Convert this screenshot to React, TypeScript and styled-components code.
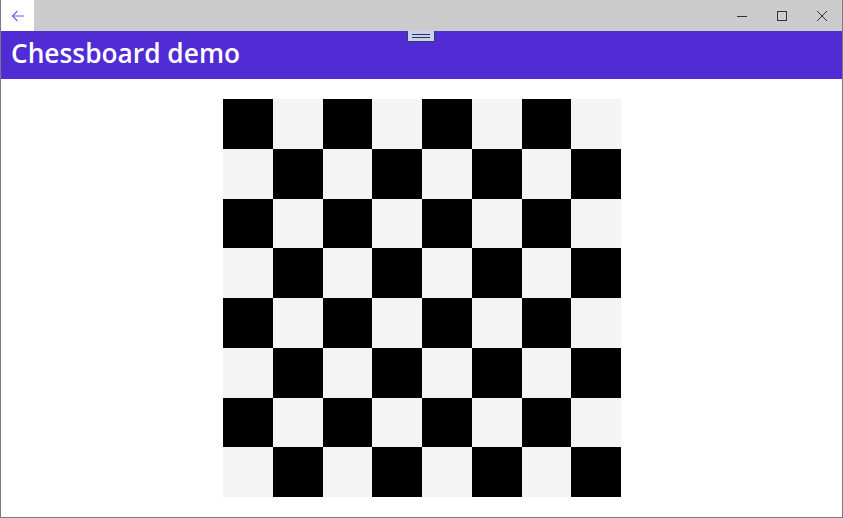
import styled, { createGlobalStyle } from 'styled-components';

const GlobalStyle = createGlobalStyle`
  html, body {
    margin: 0;
    padding: 0;
    background: #ffffff;
  }
  body {
    font-family: "Open Sans", "Noto Sans", sans-serif;
  }
`;

const Window = styled.div`
  width: 843px;
  height: 518px;
  box-sizing: border-box;
  border: 1px solid #7a7a7a;
  border-top: none;
  display: flex;
  flex-direction: column;
  background: #ffffff;
  overflow: hidden;
`;

const TitleBar = styled.div`
  height: 31px;
  display: flex;
  align-items: stretch;
  background: #cccccc;
  flex-shrink: 0;
`;

const BackButton = styled.div`
  width: 33px;
  background: #ffffff;
  display: flex;
  align-items: center;
  justify-content: center;
  color: #6b5be0;
`;

const Spacer = styled.div`
  flex: 1;
`;

const CaptionButton = styled.div`
  width: 40px;
  display: flex;
  align-items: center;
  justify-content: center;
  color: #333333;
`;

const Header = styled.div`
  position: relative;
  height: 48px;
  background: #512bd4;
  display: flex;
  align-items: center;
  padding-left: 10px;
  flex-shrink: 0;
`;

const Title = styled.h1`
  margin: 0;
  color: #ffffff;
  font-family: "Open Sans", "Noto Sans", sans-serif;
  font-weight: 600;
  font-size: 26.3px;
  line-height: 1;
  padding-bottom: 3px;
`;

const Gripper = styled.div`
  position: absolute;
  left: 406px;
  top: 0;
  width: 28px;
  height: 11px;
  box-sizing: border-box;
  background: #c9d1f2;
  border: 1px solid #3c3c5c;
  border-top: none;
  display: flex;
  flex-direction: column;
  justify-content: center;
  gap: 2px;
  padding: 0 4px;
`;

const GripLine = styled.div`
  height: 1px;
  background: #303050;
`;

const Content = styled.div`
  flex: 1;
  display: flex;
  justify-content: center;
  padding-top: 20px;
  padding-left: 1px;
`;

const Board = styled.div`
  width: 398px;
  height: 398px;
  display: grid;
  grid-template-columns: repeat(8, 1fr);
  grid-template-rows: repeat(8, 1fr);
`;

const Cell = styled.div<{ $dark: boolean }>`
  background: ${({ $dark }) => ($dark ? '#000000' : '#f4f4f4')};
`;

const cells = Array.from({ length: 64 }, (_, i) => {
  const row = Math.floor(i / 8);
  const col = i % 8;
  return (row + col) % 2 === 0;
});

const App = () => {
  return (
    <>
      <GlobalStyle />
      <Window>
        <TitleBar>
          <BackButton>
            <svg width="16" height="16" viewBox="0 0 16 16" fill="none" stroke="currentColor" strokeWidth="1.1">
              <path d="M14 8H2.5M7.5 3L2.5 8l5 5" />
            </svg>
          </BackButton>
          <Spacer />
          <CaptionButton>
            <svg width="12" height="12" viewBox="0 0 12 12" stroke="currentColor" strokeWidth="1">
              <path d="M1 6.5h10" />
            </svg>
          </CaptionButton>
          <CaptionButton>
            <svg width="12" height="12" viewBox="0 0 12 12" fill="none" stroke="currentColor" strokeWidth="1">
              <rect x="1.5" y="1.5" width="9" height="9" />
            </svg>
          </CaptionButton>
          <CaptionButton>
            <svg width="12" height="12" viewBox="0 0 12 12" stroke="currentColor" strokeWidth="1">
              <path d="M1 1l10 10M11 1L1 11" />
            </svg>
          </CaptionButton>
        </TitleBar>
        <Header>
          <Title>Chessboard demo</Title>
          <Gripper>
            <GripLine />
            <GripLine />
          </Gripper>
        </Header>
        <Content>
          <Board>
            {cells.map((dark, i) => (
              <Cell key={i} $dark={dark} />
            ))}
          </Board>
        </Content>
      </Window>
    </>
  );
};

export default App;
